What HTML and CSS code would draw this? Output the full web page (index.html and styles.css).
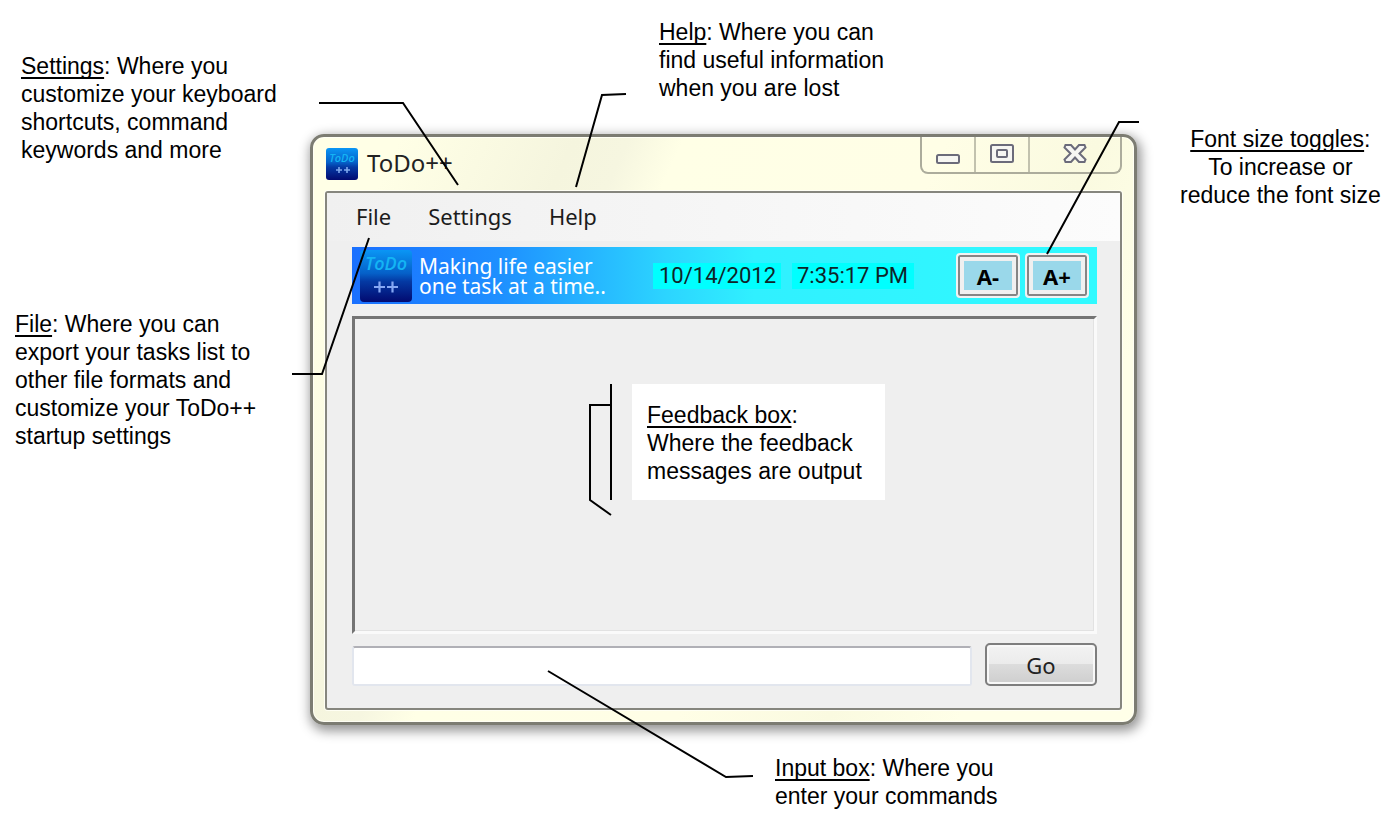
FILE: index.html
```
<!DOCTYPE html>
<html lang="en">
<head>
<meta charset="utf-8">
<title>ToDo++</title>
<link rel="stylesheet" href="styles.css">
</head>
<body>
<main class="stage">
  <section class="window">
    <header class="titlebar">
      <svg class="app-icon" viewBox="0 0 32 32" aria-hidden="true">
        <defs><linearGradient id="tile" x1="0" y1="0" x2="0" y2="1"><stop offset="0" stop-color="#0a96f5"/><stop offset=".45" stop-color="#0560c8"/><stop offset=".6" stop-color="#043aa4"/><stop offset="1" stop-color="#020a70"/></linearGradient></defs>
        <rect width="32" height="32" rx="3" fill="url(#tile)"/>
        <text x="16" y="14" class="tile-name tile-small">ToDo</text>
        <path d="M10 22h6M13 19v6M18 22h6M21 19v6" stroke="#7fa8ee" stroke-width="1.6"/>
      </svg>
      <h1 class="title">ToDo++</h1>
      <div class="caption">
        <button class="cap" aria-label="Minimize"><svg width="26" height="24" viewBox="0 0 26 24"><rect x="2" y="12" width="22" height="8" rx="1.5" class="glyph"/></svg></button>
        <button class="cap" aria-label="Maximize"><svg width="26" height="24" viewBox="0 0 26 24"><rect x="2" y="2" width="22" height="17" rx="1.5" class="glyph"/><rect x="8" y="7" width="10" height="7" rx="1" class="glyph"/></svg></button>
        <button class="cap cap-close" aria-label="Close"><svg width="26" height="24" viewBox="0 0 26 24"><path d="M3.500 2h5.500l4 4.500L17 2h5.500l1 2.500-6 6 6 6-1 2.500H17l-4-4.500L9 19H3.500l-1-2.500 6-6-6-6z" class="glyph"/></svg></button>
      </div>
    </header>
    <div class="client">
      <nav class="menu">
        <button>File</button><button>Settings</button><button>Help</button>
      </nav>
      <div class="body">
        <div class="banner">
          <svg class="logo" viewBox="0 0 52 52" aria-hidden="true">
            <rect width="52" height="52" rx="4" fill="url(#tile)"/>
            <text x="26" y="20" class="tile-name tile-large">ToDo</text>
            <path d="M14 37h11M19.500 31.500v11M27 37h11M32.500 31.500v11" stroke="#86a8f4" stroke-width="2.200"/>
          </svg>
          <p class="slogan">Making life easier<br>one task at a time..</p>
          <time class="stamp">10/14/2012</time>
          <time class="stamp stamp-time">7:35:17 PM</time>
          <div class="sizes"><button class="size">A-</button><button class="size">A+</button></div>
        </div>
        <div class="feedback"></div>
        <form class="entry">
          <input type="text" aria-label="Command">
          <button type="button" class="go">Go</button>
        </form>
      </div>
    </div>
  </section>

  <svg class="leaders" width="1400" height="823" viewBox="0 0 1400 823" aria-hidden="true">
    <path d="M319 103H403L458 185M626 94L602 95L576 187M1139 122H1119L1047 254M292 374H322L369 238M611 384V500M611 405H590V500L611 515M548 671L726 777L753 776"/>
  </svg>

  <p class="note note-settings"><u>Settings</u>: Where you<br>customize your keyboard<br>shortcuts, command<br>keywords and more</p>
  <p class="note note-help"><u>Help</u>: Where you can<br>find useful information<br>when you are lost</p>
  <p class="note note-font"><u>Font size toggles</u>:<br>To increase or<br>reduce the font size</p>
  <p class="note note-file"><u>File</u>: Where you can<br>export your tasks list to<br>other file formats and<br>customize your ToDo++<br>startup settings</p>
  <p class="note note-feedback"><u>Feedback box</u>:<br>Where the feedback<br>messages are output</p>
  <p class="note note-input"><u>Input box</u>: Where you<br>enter your commands</p>
</main>
</body>
</html>
```
FILE: styles.css
```
* { box-sizing: border-box; }
body { margin: 0; background: #fff; color: #000; }
p, h1 { margin: 0; font-weight: 400; }
button { margin: 0; padding: 0; border: 0; background: none; color: inherit; font: inherit; }

.stage { position: relative; padding: 134px 263px 97px 310px; }

.window {
  display: flex;
  flex-direction: column;
  padding: 0 12px 12px;
  border: 3px solid #7c7c72;
  border-radius: 14px;
  background: linear-gradient(115deg, #ffffe6 8%, #f5f5de 24%, #f6f6e0 29%, #ffffe6 34%, #fffee6 58%, #fafae0 72%, #ffffe8 84%);
  box-shadow: inset 0 0 0 1px #fffff4, 2px 4px 12px 2px rgba(0, 0, 0, .42);
  font-family: "Noto Sans", sans-serif;
}
.titlebar { display: flex; align-items: flex-start; height: 54px; }
.app-icon { width: 32px; height: 32px; margin: 11px 9px 0 1px; }
.title { flex: 1; padding-top: 9px; font-size: 24px; line-height: 34px; color: #222; }
.tile-name { fill: #14b4f4; font-family: "Open Sans", sans-serif; font-style: italic; font-weight: 600; text-anchor: middle; }
.tile-small { font-size: 11px; }
.tile-large { font-size: 18px; }

.caption {
  display: flex;
  height: 37px;
  border: 2px solid #acac9c;
  border-top: 0;
  border-radius: 0 0 8px 8px;
}
.cap { display: grid; place-items: center; width: 54px; border-right: 2px solid #c2c2ae; }
.cap-close { width: 90px; border: 0; }
.glyph { fill: #f6f6f2; stroke: #6b6b7a; stroke-width: 2; }

.client { border: 2px solid #86867e; border-radius: 3px; background: #efefef; box-shadow: 0 0 0 1px #fffff4; }
.menu {
  display: flex;
  gap: 37px;
  height: 48px;
  padding-left: 29px;
  background: linear-gradient(90deg, #f0f0f0, #fcfcfc);
  font-size: 22px;
  line-height: 46px;
  color: #1c1c1c;
}
.menu button { height: 46px; }
.body { display: flex; flex-direction: column; padding: 6px 23px 22px 25px; }

.banner {
  display: flex;
  align-items: center;
  height: 57px;
  padding: 0 8px;
  background: linear-gradient(90deg, #1a70ff, #1e90ff 20%, #2cd4ff 42%, #30f0ff 54%, #30faff);
}
.logo { width: 52px; height: 52px; margin-right: 7px; }
.slogan { width: 234px; color: #fff; font-size: 21px; line-height: 20px; white-space: nowrap; }
.stamp { width: 128px; padding-left: 6px; background: #0ff; font: 22px/26px Roboto, sans-serif; color: #102428; white-space: nowrap; }
.stamp-time { width: 122px; padding-left: 5px; margin-left: 11px; }
.sizes { display: flex; gap: 5px; margin-left: auto; }
.size {
  width: 64px;
  height: 45px;
  border: 2px solid #f2f2f2;
  border-radius: 4px;
  background: #9ad8ea;
  box-shadow: inset 0 0 0 2px #858585, inset 0 0 0 6px #f0f0f0;
  font: 700 22px/36px "Noto Sans", sans-serif;
}

.feedback {
  height: 318px;
  margin-top: 12px;
  border: 3px solid;
  border-color: #747474 #fafafa #fafafa #747474;
  box-shadow: inset -1px -1px #e2e2e2;
}
.entry { display: flex; align-items: flex-end; gap: 13px; margin-top: 9px; }
.entry input {
  flex: 1;
  min-width: 0;
  height: 40px;
  border: 2px solid #e2e6ee;
  border-top-color: #b0b0b6;
  border-radius: 3px;
  background: #fff;
  padding: 0 8px;
  font-size: 22px;
}
.go {
  width: 112px;
  height: 43px;
  border: 2px solid #7e7e7e;
  border-radius: 5px;
  background: linear-gradient(#f3f3f3, #ebebeb 48%, #dcdcdc 50%, #cecece);
  box-shadow: inset 0 0 0 2px #f8f8f8;
  font-size: 22px;
  line-height: 36px;
  color: #222;
}

.leaders { position: absolute; top: 0; left: 0; pointer-events: none; }
.leaders path { fill: none; stroke: #000; stroke-width: 2; }

/* Callouts pinned around the window */
.note { position: absolute; font: 23px/28px "Liberation Sans", Arial, sans-serif; white-space: nowrap; }
.note u { text-underline-offset: 3px; text-decoration-thickness: 2px; text-decoration-skip-ink: none; }
.note-settings { left: 21px; top: 52px; }
.note-help { left: 659px; top: 18px; }
.note-font { left: 1180px; top: 125px; text-align: center; }
.note-file { left: 15px; top: 310px; }
.note-feedback { left: 632px; top: 384px; padding: 17px 23px 15px 15px; background: #fff; }
.note-input { left: 775px; top: 754px; }
```
